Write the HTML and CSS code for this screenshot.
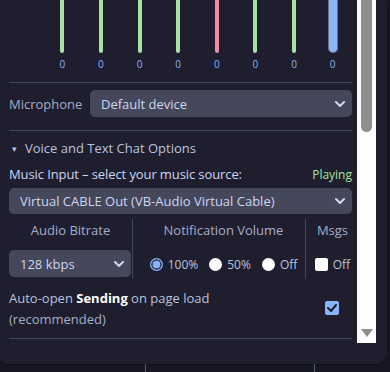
FILE: index.html
```html
<!DOCTYPE html>
<html lang="en">

<head>
    <meta charset="UTF-8">
    <meta name="viewport" content="width=device-width, initial-scale=1.0">
    <title>Audio Settings</title>
    <link rel="stylesheet" href="styles.css">
</head>

<body>
    <div class="panel">
        <div class="scroll-area">
            <div class="meters">
                <div class="meter"><span class="bar"></span><span class="val">0</span></div>
                <div class="meter"><span class="bar"></span><span class="val">0</span></div>
                <div class="meter"><span class="bar"></span><span class="val">0</span></div>
                <div class="meter"><span class="bar"></span><span class="val">0</span></div>
                <div class="meter"><span class="bar red"></span><span class="val">0</span></div>
                <div class="meter"><span class="bar"></span><span class="val">0</span></div>
                <div class="meter"><span class="bar"></span><span class="val">0</span></div>
                <div class="meter"><span class="bar master"></span><span class="val">0</span></div>
            </div>

            <hr class="divider">

            <div class="mic-row">
                <span class="mic-label">Microphone</span>
                <div class="select mic-select">
                    <span>Default device</span>
                    <svg class="chevron" width="10" height="6" viewBox="0 0 10 6"><path d="M1 1l4 4 4-4" fill="none" stroke="#cdd6f4" stroke-width="2" stroke-linecap="round" stroke-linejoin="round"/></svg>
                </div>
            </div>

            <hr class="divider">

            <div class="section-title"><span class="caret">&#9662;</span>Voice and Text Chat Options</div>

            <div class="music-row">
                <span class="music-label">Music Input &ndash; select your music source:</span>
                <span class="status">Playing</span>
            </div>

            <div class="select wide-select">
                <span>Virtual CABLE Out (VB-Audio Virtual Cable)</span>
                <svg class="chevron" width="10" height="6" viewBox="0 0 10 6"><path d="M1 1l4 4 4-4" fill="none" stroke="#cdd6f4" stroke-width="2" stroke-linecap="round" stroke-linejoin="round"/></svg>
            </div>

            <div class="options-grid">
                <div class="opt-col">
                    <div class="opt-head">Audio Bitrate</div>
                    <div class="select bitrate-select">
                        <span>128 kbps</span>
                        <svg class="chevron" width="10" height="6" viewBox="0 0 10 6"><path d="M1 1l4 4 4-4" fill="none" stroke="#cdd6f4" stroke-width="2" stroke-linecap="round" stroke-linejoin="round"/></svg>
                    </div>
                </div>
                <div class="opt-col bordered volume-col">
                    <div class="opt-head">Notification Volume</div>
                    <div class="radio-row">
                        <label class="choice"><span class="radio checked"></span>100%</label>
                        <label class="choice"><span class="radio"></span>50%</label>
                        <label class="choice"><span class="radio"></span>Off</label>
                    </div>
                </div>
                <div class="opt-col bordered msgs-col">
                    <div class="opt-head">Msgs</div>
                    <div class="radio-row">
                        <label class="choice"><span class="box"></span>Off</label>
                    </div>
                </div>
            </div>

            <div class="autoopen-row">
                <p>Auto-open <b>Sending</b> on page load<br><span class="muted">(recommended)</span></p>
                <span class="box checked">
                    <svg width="10" height="8" viewBox="0 0 10 8"><path d="M1 4l3 3 5-6" fill="none" stroke="#1e1e2e" stroke-width="2" stroke-linecap="round" stroke-linejoin="round"/></svg>
                </span>
            </div>

            <hr class="divider">
        </div>

        <div class="scrollbar">
            <div class="thumb"></div>
            <div class="arrow"></div>
        </div>
    </div>

    <div class="below">
        <span class="rule"></span>
        <span class="rule second"></span>
    </div>
</body>

</html>
```

FILE: styles.css
```css
body {
    margin: 0;
    width: 390px;
    height: 372px;
    overflow: hidden;
    font-family: 'Open Sans', sans-serif;
    background-color: #181825;
    color: #cdd6f4;
}

.panel {
    display: flex;
    width: 390px;
    height: 364px;
    margin-left: -3px;
    padding-right: 11px;
    box-sizing: border-box;
    background-color: #1e1e2e;
    border-radius: 0 0 12px 12px;
    box-shadow: 0 1px 3px rgba(0, 0, 0, 0.4);
}

.scroll-area {
    width: 360px;
    height: 343px;
    padding: 0 5px 0 12px;
    box-sizing: border-box;
    overflow: hidden;
}

.meters {
    display: flex;
    height: 82px;
    padding-left: 34px;
}

.meter {
    display: flex;
    flex-direction: column;
    align-items: center;
    width: 39px;
}

.bar {
    width: 4px;
    height: 53px;
    background-color: #a6e3a1;
    border-radius: 0 0 2px 2px;
}

.bar.red {
    background-color: #f38ba8;
}

.bar.master {
    width: 8px;
    height: 52px;
    background-color: #89b4fa;
    border: 1px solid #6c7086;
    border-top: none;
    border-radius: 0 0 5px 5px;
}

.val {
    margin-top: 4px;
    font-size: 10px;
    line-height: 14px;
    color: #89b4fa;
}

.divider {
    margin: 0;
    border: none;
    border-top: 1px solid #45475a;
}

.mic-row {
    display: flex;
    align-items: center;
    height: 27px;
    margin: 7px 0 13px;
}

.mic-label {
    width: 81px;
    font-size: 13px;
    color: #a6adc8;
}

.select {
    display: flex;
    align-items: center;
    justify-content: space-between;
    box-sizing: border-box;
    background-color: #45475a;
    border-radius: 5px;
    font-size: 13px;
    color: #cdd6f4;
}

.mic-select {
    flex: 1;
    height: 27px;
    padding: 0 7px 0 11px;
}

.chevron {
    flex-shrink: 0;
}

.section-title {
    display: flex;
    align-items: center;
    height: 34px;
    font-size: 13px;
    color: #bac2de;
}

.caret {
    width: 13px;
    padding-left: 3px;
    font-size: 9px;
}

.music-row {
    display: flex;
    justify-content: space-between;
    align-items: center;
    height: 18px;
    font-size: 12px;
}

.music-label {
    font-size: 13px;
    letter-spacing: -0.1px;
}

.status {
    color: #a6e3a1;
}

.wide-select {
    height: 26px;
    margin-top: 5px;
    padding: 0 7px 0 11px;
}

.options-grid {
    display: grid;
    grid-template-columns: 123px 173px 1fr;
    height: 58px;
    margin-top: 5px;
}

.opt-col {
    display: flex;
    flex-direction: column;
    align-items: center;
}

.opt-col.bordered {
    border-left: 1px solid #45475a;
}

.volume-col {
    padding-left: 9px;
}

.msgs-col {
    padding-left: 7px;
}

.opt-head {
    height: 31px;
    line-height: 22px;
    font-size: 13px;
    color: #a6adc8;
}

.bitrate-select {
    align-self: stretch;
    height: 27px;
    margin-right: 1px;
    padding: 0 7px 0 11px;
}

.radio-row {
    display: flex;
    align-items: center;
    gap: 11px;
    height: 29px;
}

.choice {
    display: flex;
    align-items: center;
    gap: 5px;
    font-size: 12px;
    color: #bac2de;
}

.radio {
    width: 13px;
    height: 13px;
    border-radius: 50%;
    background-color: #ffffff;
}

.radio.checked {
    background: radial-gradient(circle, #89b4fa 0 3.5px, #3c4a6e 4px 5px, #89b4fa 5.5px);
}

.box {
    width: 13px;
    height: 13px;
    border-radius: 2px;
    background-color: #ffffff;
}

.box.checked {
    display: flex;
    align-items: center;
    justify-content: center;
    width: 14px;
    height: 14px;
    margin-top: 13px;
    background-color: #89b4fa;
}

.autoopen-row {
    display: flex;
    justify-content: space-between;
    align-items: flex-start;
    height: 61px;
    padding: 11px 13px 0 0;
    box-sizing: border-box;
}

.autoopen-row p {
    margin: 0;
    font-size: 13px;
    line-height: 21px;
    color: #bac2de;
}

.autoopen-row b {
    color: #ffffff;
}

.muted {
    color: #a6adc8;
}

.scrollbar {
    display: flex;
    flex-direction: column;
    justify-content: space-between;
    align-items: center;
    width: 19px;
    height: 343px;
    background-color: #fdfdfd;
}

.thumb {
    width: 11px;
    height: 132px;
    background-color: #8f8f8f;
    border-radius: 0 0 6px 6px;
}

.arrow {
    width: 0;
    height: 0;
    margin-bottom: 6px;
    border-left: 6px solid transparent;
    border-right: 6px solid transparent;
    border-top: 8px solid #8f8f8f;
}

.below {
    display: flex;
    height: 8px;
    padding-left: 145px;
}

.rule {
    width: 1px;
    background-color: #585b70;
}

.rule.second {
    margin-left: 168px;
}
```
